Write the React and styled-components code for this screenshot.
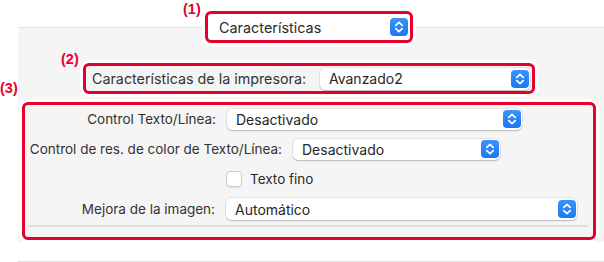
import React from "react";
import styled, { createGlobalStyle } from "styled-components";

const GlobalStyle = createGlobalStyle`
  html, body {
    margin: 0;
    padding: 0;
    background: #ffffff;
  }
  body {
    font-family: "Inter", "Roboto", "Liberation Sans", sans-serif;
    font-size: 13.5px;
    color: #2b2b2b;
    -webkit-font-smoothing: antialiased;
  }
`;

const RED = "#e5002d";

const Page = styled.div`
  width: 604px;
  height: 262px;
  overflow: hidden;
  display: flex;
  flex-direction: column;
`;

const TopRow = styled.div`
  display: flex;
  padding: 11px 0 0 205px;
  margin-bottom: -16px;
  position: relative;
  z-index: 1;
`;

const Annotated = styled.div`
  position: relative;
  display: flex;
`;

const Tag = styled.span`
  position: absolute;
  left: ${(p) => p.$left}px;
  top: ${(p) => p.$top}px;
  font-family: "Liberation Sans", Arial, sans-serif;
  font-weight: bold;
  font-size: 14.5px;
  line-height: 15px;
  color: ${RED};
`;

const RedFrame = styled.div`
  box-sizing: border-box;
  width: ${(p) => p.$w}px;
  border: 3px solid ${RED};
  border-radius: 6px;
  box-shadow: 0 0 0 3px #ffffff;
  background: ${(p) => (p.$white ? "#ffffff" : "#f5f5f5")};
`;

const TabFrame = styled(RedFrame)`
  height: 32px;
  display: flex;
  align-items: center;
  justify-content: space-between;
  padding: 0 2px 0 11px;
  font-size: 14.4px;
`;

const Panel = styled.div`
  margin-left: 18px;
  background: #f5f5f5;
  border-top: 1px solid #e4e4e4;
  padding: 35px 0 2px 0;
  display: flex;
  flex-direction: column;
`;

const PrinterRow = styled.div`
  display: flex;
  padding-left: 65px;
`;

const PrinterFrame = styled(RedFrame)`
  height: 31px;
  display: flex;
  align-items: center;
  justify-content: space-between;
  padding: 0 2px 0 6px;
  font-size: 14.3px;
`;

const PrinterLabel = styled.span`
  white-space: nowrap;
  color: #333333;
`;

const FeatureWrap = styled.div`
  display: flex;
  margin: 8px 8px 0 4px;
`;

const FeatureFrame = styled(RedFrame)`
  display: flex;
  flex-direction: column;
  gap: 2px;
  padding: 0 0 10px 0;
`;

const Row = styled.div`
  display: grid;
  grid-template-columns: ${(p) => p.$label}px auto;
  align-items: center;
  height: 28px;
`;

const Label = styled.span`
  text-align: right;
  padding-right: 11px;
  white-space: nowrap;
  color: #333333;
`;

const PopupBox = styled.div`
  box-sizing: border-box;
  width: ${(p) => p.$w}px;
  height: ${(p) => p.$h || 21}px;
  background: #ffffff;
  border-radius: 5px;
  box-shadow: 0 0 0 0.5px rgba(0, 0, 0, 0.12), 0 1px 1.5px rgba(0, 0, 0, 0.2);
  display: flex;
  align-items: center;
  justify-content: space-between;
  padding: 0 1px 0 9px;
  color: #262626;
  font-size: 14px;
`;

const CheckRow = styled.label`
  display: flex;
  align-items: center;
  gap: 8px;
`;

const CheckBox = styled.span`
  box-sizing: border-box;
  width: 16px;
  height: 16px;
  border-radius: 4px;
  background: #ffffff;
  border: 1px solid #cdcdcd;
  box-shadow: 0 0.5px 1px rgba(0, 0, 0, 0.08);
`;

const Divider = styled.div`
  height: 2px;
  background: #dedede;
  margin: 0 5px 0 3px;
`;

const BottomRule = styled.div`
  margin: 19px 0 0 18px;
  height: 1px;
  background: #e2e2e2;
`;

const Stepper = ({ size = 18 }) => (
  <svg width={size} height={size} viewBox="0 0 18 18">
    <defs>
      <linearGradient id="stepGrad" x1="0" y1="0" x2="0" y2="1">
        <stop offset="0" stopColor="#3a93fc" />
        <stop offset="1" stopColor="#1a78f2" />
      </linearGradient>
    </defs>
    <rect x="0" y="0" width="18" height="18" rx="4" fill="url(#stepGrad)" />
    <path
      d="M5.8 7.4 L9 4.4 L12.2 7.4 M5.8 10.6 L9 13.6 L12.2 10.6"
      fill="none"
      stroke="#ffffff"
      strokeWidth="1.7"
      strokeLinecap="round"
      strokeLinejoin="round"
    />
  </svg>
);

const Popup = ({ value, width, height }) => (
  <PopupBox $w={width} $h={height}>
    <span>{value}</span>
    <Stepper />
  </PopupBox>
);

export default function App() {
  return (
    <Page>
      <GlobalStyle />
      <TopRow>
        <Annotated>
          <Tag $left={-22} $top={-9}>(1)</Tag>
          <TabFrame $w={208} $white>
            <span>Características</span>
            <Stepper />
          </TabFrame>
        </Annotated>
      </TopRow>

      <Panel>
        <PrinterRow>
          <Annotated>
            <Tag $left={-22} $top={-11}>(2)</Tag>
            <PrinterFrame $w={452}>
              <PrinterLabel>Características de la impresora:</PrinterLabel>
              <Popup value="Avanzado2" width={210} height={22} />
            </PrinterFrame>
          </Annotated>
        </PrinterRow>

        <FeatureWrap>
          <Annotated>
            <Tag $left={-22} $top={-21}>(3)</Tag>
            <FeatureFrame $w={574}>
              <Row $label={202}>
                <Label>Control Texto/Línea:</Label>
                <Popup value="Desactivado" width={295} />
              </Row>
              <Row $label={268}>
                <Label>Control de res. de color de Texto/Línea:</Label>
                <Popup value="Desactivado" width={207} />
              </Row>
              <Row $label={201}>
                <span />
                <CheckRow>
                  <CheckBox />
                  <span>Texto fino</span>
                </CheckRow>
              </Row>
              <Row $label={201}>
                <Label>Mejora de la imagen:</Label>
                <Popup value="Automático" width={351} height={22} />
              </Row>
              <Divider />
            </FeatureFrame>
          </Annotated>
        </FeatureWrap>
      </Panel>

      <BottomRule />
    </Page>
  );
}
